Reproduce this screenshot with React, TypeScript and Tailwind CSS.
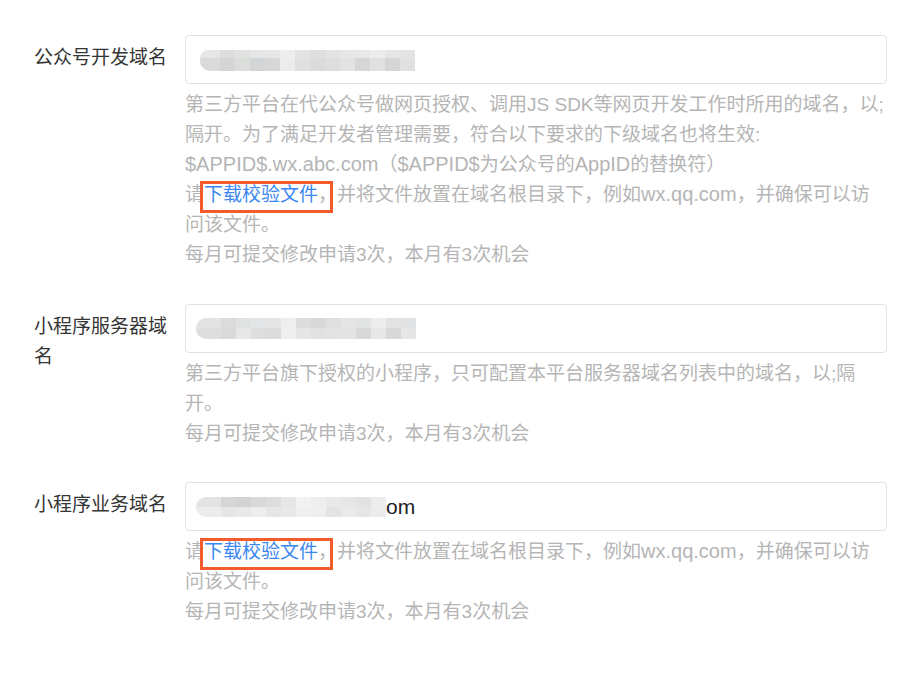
import type { ReactNode } from "react";

type MosaicProps = {
  top: string[];
  bottom: string[];
  topH: number;
  bottomH: number;
  first?: number;
};

// pixelated blur over the stored domain
function Mosaic({ top, bottom, topH, bottomH, first = 20 }: MosaicProps) {
  const row = (colors: string[], h: number, round: string) => (
    <div className="flex">
      {colors.map((c, i) => (
        <div
          key={i}
          className={i === 0 ? round : ""}
          style={{ background: c, height: h, width: i === 0 ? first : 15 }}
        />
      ))}
    </div>
  );
  return (
    <div className="flex flex-col">
      {row(top, topH, "rounded-tl-[10px]")}
      {row(bottom, bottomH, "rounded-bl-[10px]")}
    </div>
  );
}

// latin runs render a touch wider than the CJK text around them
function L({ children }: { children: ReactNode }) {
  return <span className="text-[20px] leading-none">{children}</span>;
}

function Link() {
  return (
    <span className="relative">
      <span className="text-[#3b87f2]">下载校验文件</span>，
      <span className="absolute -left-[4px] right-[4px] -top-[3px] -bottom-[8px] border-[3px] border-[#f25c2c]" />
    </span>
  );
}

type FieldProps = {
  label: string;
  value: ReactNode;
  children: ReactNode;
  className?: string;
};

function Field({ label, value, children, className = "" }: FieldProps) {
  return (
    <div className={`flex ${className}`}>
      <div className="w-[140px] mr-[11px] pt-2 text-[19px] leading-[30px] text-[#353535]">
        {label}
      </div>
      <div className="w-[702px]">
        <div className="h-[49px] border border-[#e2e2e2] rounded-[4px] flex items-center pl-[10px]">
          {value}
        </div>
        <div className="mt-[6px] text-[19px] leading-[30px] text-[#b5b5b5]">
          {children}
        </div>
      </div>
    </div>
  );
}

export default function App() {
  return (
    <div
      className="w-[915px] h-[680px] bg-white pt-[35px] pl-[34px]"
      style={{ fontFamily: '"Liberation Sans", "Noto Sans CJK SC", sans-serif' }}
    >
      <Field
        label="公众号开发域名"
        className="mb-[34px]"
        value={
          <div className="ml-[4px] mt-[2px]">
            <Mosaic
              topH={8}
              bottomH={13}
              top={["#e6e6e6", "#dddddd", "#e1e3e1", "#e4e6e7", "#e7e7e7", "#eeeeee", "#e3e3e3", "#dedede", "#e3e3e3", "#e7e7e7", "#e7e9e9", "#ececec", "#e7e5e5", "#e3e4e5"]}
              bottom={["#dadada", "#d5d5d5", "#dcdedc", "#d2d4d6", "#d7d7d7", "#ececec", "#e0e0e0", "#dbdbdb", "#dedede", "#e3e3e3", "#d6d6d6", "#e1e1e1", "#d5d5d5", "#e1e1e1"]}
            />
          </div>
        }
      >
        <div>
          第三方平台在代公众号做网页授权、调用JS SDK等网页开发工作时所用的域名，以;隔开。为了满足开发者管理需要，符合以下要求的下级域名也将生效:
        </div>
        <div>
          <L>$APPID$.wx.abc.com</L>（<L>$APPID$</L>为公众号的<L>AppID</L>的替换符）
        </div>
        <div>
          请<Link />并将文件放置在域名根目录下，例如<L>wx.qq.com</L>，并确保可以访问该文件。
        </div>
        <div>每月可提交修改申请3次，本月有3次机会</div>
      </Field>

      <Field
        label="小程序服务器域名"
        className="mb-[33px]"
        value={
          <Mosaic
            topH={10}
            bottomH={11}
            first={25}
            top={["#e3e3e3", "#dcdbdb", "#e0e1e1", "#e3e5e6", "#e6e6e6", "#eeeeee", "#dcdcdc", "#d8d8d8", "#dfdfdf", "#e5e5e5", "#e2e3e3", "#ededed", "#e4e3e3", "#e1e2e3"]}
            bottom={["#dedede", "#dadada", "#e7e7e7", "#dddddd", "#dcdcdc", "#efefef", "#e6e6e6", "#e1e1e1", "#e3e3e3", "#e4e4e4", "#d9d9d9", "#e7e7e7", "#d9d9d9", "#e6e6e6"]}
          />
        }
      >
        <div>第三方平台旗下授权的小程序，只可配置本平台服务器域名列表中的域名，以;隔开。</div>
        <div>每月可提交修改申请3次，本月有3次机会</div>
      </Field>

      <Field
        label="小程序业务域名"
        value={
          <div className="flex items-center">
            <Mosaic
              topH={10}
              bottomH={10}
              first={25}
              top={["#e3e3e3", "#d6d6d6", "#d3d3d3", "#d9d9d9", "#dcdddd", "#e6e6e6", "#f2f2f2", "#eeeeee", "#e9e9e9", "#e6e6e6", "#e2e2e2", "#ededed"]}
              bottom={["#ececec", "#e6e6e6", "#e9e9e9", "#eeeeee", "#e6e6e6", "#e8e8e8", "#f0f0f0", "#efefef", "#e4e4e4", "#eaeaea", "#e6e6e6", "#ececec"]}
            />
            <span className="text-[21px] text-[#222]">om</span>
          </div>
        }
      >
        <div>
          请<Link />并将文件放置在域名根目录下，例如<L>wx.qq.com</L>，并确保可以访问该文件。
        </div>
        <div>每月可提交修改申请3次，本月有3次机会</div>
      </Field>
    </div>
  );
}
